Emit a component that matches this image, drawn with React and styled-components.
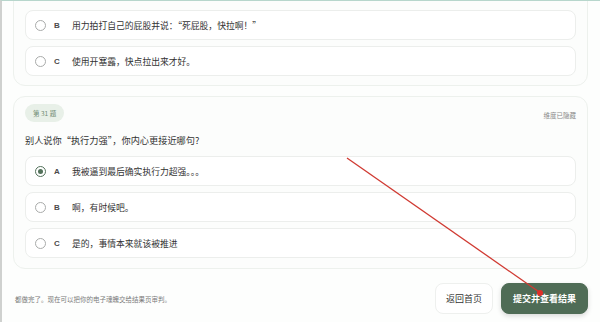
import React from 'react';
import styled, { createGlobalStyle } from 'styled-components';

const GlobalStyle = createGlobalStyle`
  html, body {
    margin: 0;
    padding: 0;
    background: #fdfefd;
    overflow: hidden;
  }
  body {
    font-family: "Noto Sans CJK SC", "Noto Sans", sans-serif;
  }
`;

const Page = styled.div`
  position: relative;
  width: 600px;
  height: 322px;
  box-sizing: border-box;
  border-left: 2px solid #cfd1cf;
  border-top: 1px solid #b7d6cc;
  padding: 0 12px 0 11px;
  overflow: hidden;
`;

const Card = styled.div`
  background: #fcfdfc;
  border: 1px solid #edf1ed;
  border-radius: 12px;
  padding: ${(p) => p.$pad};
  margin-top: ${(p) => p.$top || '0'};
  display: flex;
  flex-direction: column;
`;

const CardHead = styled.div`
  display: flex;
  justify-content: space-between;
  align-items: center;
`;

const Badge = styled.span`
  background: #e8f0e8;
  color: #6f8b73;
  font-size: 6.5px;
  border-radius: 10px;
  padding: 0 8px;
  height: 18px;
  line-height: 18px;
`;

const Hidden = styled.span`
  color: #8a8a8a;
  font-size: 6.5px;
  margin-top: 4px;
`;

const Question = styled.div`
  color: #333;
  font-size: 9.2px;
  margin: 11px 0 9px;
`;

const Options = styled.div`
  display: flex;
  flex-direction: column;
  gap: 6px;
`;

const Option = styled.div`
  display: flex;
  align-items: center;
  height: 30px;
  box-sizing: border-box;
  background: #fff;
  border: 1px solid #eceeec;
  border-radius: 8px;
  padding-left: 9px;
`;

const Radio = styled.span`
  width: 9px;
  height: 9px;
  border-radius: 50%;
  border: 1px solid ${(p) => (p.$checked ? '#52715a' : '#a9abaa')};
  display: flex;
  align-items: center;
  justify-content: center;
  &::after {
    content: '';
    width: 5px;
    height: 5px;
    border-radius: 50%;
    background: ${(p) => (p.$checked ? '#52715a' : 'transparent')};
  }
`;

const Letter = styled.span`
  width: 18px;
  margin-left: 8px;
  color: #4a4a4a;
  font-family: "Liberation Sans", sans-serif;
  font-weight: bold;
  font-size: 8px;
`;

const Text = styled.span`
  color: #333;
  font-size: 8.8px;
`;

const Footer = styled.div`
  display: flex;
  align-items: center;
  justify-content: space-between;
  margin-top: 14px;
`;

const Note = styled.span`
  color: #7a7a7a;
  font-size: 6.5px;
  padding-left: 2px;
`;

const Actions = styled.div`
  display: flex;
  gap: 8px;
`;

const Button = styled.button`
  height: 31px;
  padding: 0 ${(p) => (p.$primary ? '11px' : '10px')};
  border-radius: 8px;
  font-family: "Noto Sans CJK SC", sans-serif;
  font-size: 9px;
  font-weight: ${(p) => (p.$primary ? 'bold' : 'normal')};
  color: ${(p) => (p.$primary ? '#fff' : '#333')};
  background: ${(p) => (p.$primary ? '#4f6c56' : '#fff')};
  border: 1px solid ${(p) => (p.$primary ? '#4f6c56' : '#eef0ee')};
  box-shadow: ${(p) => (p.$primary ? '0 2px 5px rgba(0,0,0,0.15)' : 'none')};
`;

const Annotation = styled.svg`
  position: absolute;
  left: 0;
  top: 0;
  pointer-events: none;
`;

const OptionRow = ({ letter, text, checked }) => (
  <Option>
    <Radio $checked={checked} />
    <Letter>{letter}</Letter>
    <Text>{text}</Text>
  </Option>
);

export default function App() {
  return (
    <>
      <GlobalStyle />
      <Page>
        <Card $pad="20px 11px 9px" $top="-12px">
          <Options>
            <OptionRow letter="B" text="用力拍打自己的屁股并说：“死屁股，快拉啊！”" />
            <OptionRow letter="C" text="使用开塞露，快点拉出来才好。" />
          </Options>
        </Card>
        <Card $pad="7px 11px 10px" $top="10px">
          <CardHead>
            <Badge>第 31 题</Badge>
            <Hidden>维度已隐藏</Hidden>
          </CardHead>
          <Question>别人说你“执行力强”，你内心更接近哪句?</Question>
          <Options>
            <OptionRow letter="A" text="我被逼到最后确实执行力超强。。。" checked />
            <OptionRow letter="B" text="啊，有时候吧。" />
            <OptionRow letter="C" text="是的，事情本来就该被推进" />
          </Options>
        </Card>
        <Footer>
          <Note>都做完了。现在可以把你的电子魂魄交给结果页审判。</Note>
          <Actions>
            <Button>返回首页</Button>
            <Button $primary>提交并查看结果</Button>
          </Actions>
        </Footer>
        <Annotation width="600" height="322">
          <line x1="345" y1="157" x2="540" y2="293" stroke="#d03a32" strokeWidth="1.3" />
          <circle cx="538" cy="292" r="3" fill="#e0302a" />
        </Annotation>
      </Page>
    </>
  );
}
